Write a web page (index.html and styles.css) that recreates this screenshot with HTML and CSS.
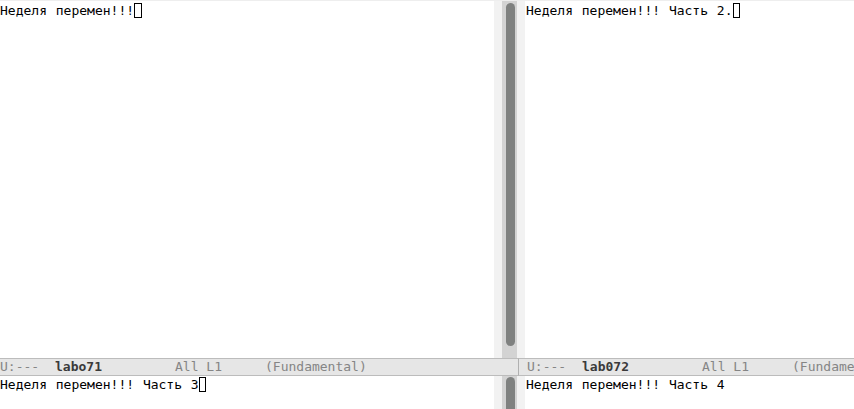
FILE: index.html
```html
<!DOCTYPE html>
<html lang="ru">
<head>
<meta charset="utf-8">
<title>emacs</title>
<link rel="stylesheet" href="styles.css">
</head>
<body>
<div class="frame">
  <div class="row top">
    <div class="win left">
      <div class="text"><span>Неделя перемен!!!</span><span class="cursor"></span></div>
      <div class="fringe"></div>
      <div class="sb"><div class="thumb"></div></div>
    </div>
    <div class="win right">
      <div class="fringe"></div>
      <div class="text"><span>Неделя перемен!!! Часть 2.</span><span class="cursor"></span></div>
    </div>
  </div>
  <div class="row modes">
    <div class="mode left">
      <span class="m1">U:---</span><span class="m2">labo71</span><span class="m3">All L1</span><span class="m4">(Fundamental)</span>
    </div>
    <div class="mode right">
      <span class="m1">U:---</span><span class="m2">lab072</span><span class="m3">All L1</span><span class="m4">(Fundamental)</span>
    </div>
  </div>
  <div class="row bottom">
    <div class="win left">
      <div class="text"><span>Неделя перемен!!! Часть 3</span><span class="cursor"></span></div>
      <div class="fringe"></div>
      <div class="sb"><div class="thumb"></div></div>
    </div>
    <div class="win right">
      <div class="fringe"></div>
      <div class="text"><span>Неделя перемен!!! Часть 4</span></div>
    </div>
  </div>
</div>
</body>
</html>
```
FILE: styles.css
```css
html, body {
  margin: 0;
  padding: 0;
  background: #ffffff;
}
.frame {
  width: 854px;
  height: 409px;
  overflow: hidden;
  display: flex;
  flex-direction: column;
  font-family: "DejaVu Sans Mono", monospace;
  font-size: 13px;
  color: #000;
  white-space: pre;
}
.row {
  display: flex;
}
.top {
  height: 358px;
  border-top: 1px solid #eeeeee;
  box-sizing: border-box;
}
.modes {
  height: 18px;
}
.bottom {
  flex: 1;
}
.win {
  display: flex;
  height: 100%;
}
.win.left {
  width: 517px;
  flex: none;
}
.win.right {
  flex: 1;
  min-width: 0;
}
.text {
  flex: 1;
  min-width: 0;
  overflow: hidden;
  line-height: 15px;
  padding-top: 2px;
  word-spacing: 1px;
}
.win.right .text {
  padding-left: 1px;
}
.bottom .text {
  padding-top: 1px;
}
.cursor {
  display: inline-block;
  width: 1ch;
  height: 15px;
  box-sizing: border-box;
  border: 1px solid #000;
  vertical-align: top;
}
.fringe {
  width: 8px;
  flex: none;
  background: #f2f2f2;
}
.sb {
  width: 15px;
  flex: none;
  background: #d3d3d3;
  display: flex;
  flex-direction: column;
}
.thumb {
  width: 9px;
  margin-left: 4px;
  background: #7f8180;
  border-radius: 5px;
}
.top .thumb {
  margin-top: 2px;
  height: 343px;
}
.bottom .thumb {
  margin-top: 1px;
  flex: 1;
  border-bottom-left-radius: 0;
  border-bottom-right-radius: 0;
}
.mode {
  box-sizing: border-box;
  height: 18px;
  background: #e6e6e6;
  border-top: 1px solid #bcbcbc;
  border-bottom: 1px solid #bcbcbc;
  line-height: 16px;
  color: #858585;
  overflow: hidden;
  display: flex;
}
.mode.left {
  width: 519px;
  flex: none;
  border-right: 1px solid #b0b0b0;
}
.mode.right {
  flex: 1;
  padding-left: 8px;
}
.mode span {
  display: inline-block;
  flex: none;
}
.m1 { width: 55px; }
.m2 { width: 120px; font-weight: bold; color: #3a3a3a; }
.m3 { width: 90px; }
```
